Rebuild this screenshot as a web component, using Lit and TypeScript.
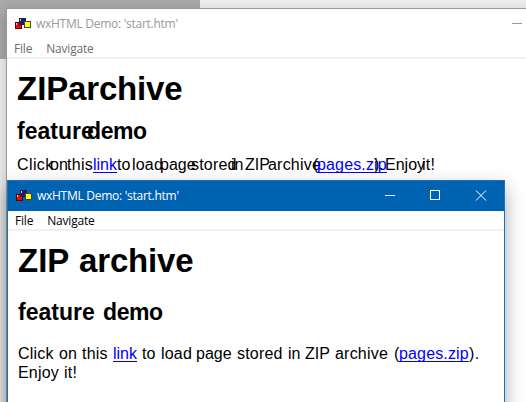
import { LitElement, html, css, svg } from "lit";
import { customElement, property } from "lit/decorators.js";
import { styleMap } from "lit/directives/style-map.js";

type Word = { t: string; w: number; s?: number; link?: boolean };

const words = (list: Word[]) => list.map((w) => html`<span
  class="word ${w.link ? "link" : ""}"
  style=${styleMap({ width: `${w.w}px`, letterSpacing: `${w.s ?? 0}px` })}>${w.t}</span>`);

@customElement("demo-window")
class DemoWindow extends LitElement {
  @property({ type: Boolean, reflect: true }) active = false;

  static styles = css`
    :host {
      box-sizing: border-box;
      display: flex;
      flex-direction: column;
      border: 1px solid #999;
      background: #fff;
      box-shadow: 0 4px 14px rgba(0, 0, 0, 0.22);
    }
    :host([active]) {
      border-color: #1a73b9;
      box-shadow: 0 8px 18px rgba(0, 0, 0, 0.34);
    }
    .title {
      display: flex;
      align-items: center;
      height: 30px;
      padding-left: 8px;
      color: #999;
      font: 12px/16px "Open Sans", "Noto Sans", sans-serif;
    }
    :host([active]) .title { background: #0063b1; color: #fff; }
    .logo { width: 16px; height: 12px; flex: none; margin-top: -1px; }
    .caption { flex: 1; margin-left: 5px; letter-spacing: -0.27px; white-space: pre; }
    .buttons { width: 137px; height: 30px; flex: none; }
    .menu {
      display: flex;
      gap: 14px;
      height: 18px;
      padding-left: 7px;
      border-bottom: 2px solid #f0f0f0;
      color: #6d6d6d;
      font: 12px/20px "Open Sans", "Noto Sans", sans-serif;
      letter-spacing: -0.2px;
    }
    :host([active]) .menu { color: #000; }
  `;

  render() {
    const box = (x: number, y: number, fill: string, edge: string) => svg`
      <rect x=${x} y=${y} width="7" height="7" fill=${edge}/>
      <rect x=${x + 1} y=${y + 1} width="5" height="5" fill=${fill}/>
      <rect x=${x + 1} y=${y + 1} width="1" height="2" fill="#fff" fill-opacity=".8"/>`;
    return html`
      <div class="title">
        <svg class="logo" viewBox="0 0 16 12" shape-rendering="crispEdges">
          ${box(0, 4, "#f00", "#500")}${box(4, 0, "#1c1c78", "#223")}${box(9, 3, "#ff0", "#443")}
        </svg>
        <span class="caption">wxHTML Demo: 'start.htm'</span>
        <svg class="buttons" viewBox="0 0 137 30" fill="none" stroke="currentColor">
          <path d="M18 14.5h10"/>
          <rect x="63.5" y="9.5" width="9" height="9"/>
          <path d="M109 9.5l10 10M119 9.5l-10 10"/>
        </svg>
      </div>
      <div class="menu"><span>File</span><span>Navigate</span></div>
      <slot></slot>`;
  }
}

@customElement("app-root")
class AppRoot extends LitElement {
  static styles = css`
    :host {
      display: block;
      position: relative;
      width: 526px;
      height: 402px;
      overflow: hidden;
      background: #f0f0f0;
      color: #000;
      font-family: "Liberation Sans", Arial, sans-serif;
    }
    .desktop-pane {
      position: absolute;
      left: 0;
      top: 0;
      width: 200px;
      height: 59px;
      background: #a9a9a9;
    }
    .back { position: absolute; left: 6px; top: 8px; width: 626px; height: 440px; }
    .front { position: absolute; left: 7px; top: 180px; width: 498px; height: 240px; }
    .page { padding: 9px 0 0 10px; }
    .row { display: flex; white-space: pre; }
    .word { flex: none; white-space: pre; }
    .link { color: #00f; text-decoration: underline; text-underline-offset: 2px; text-decoration-thickness: 1px; text-decoration-skip-ink: none; }
    .h1 { font-size: 33px; line-height: 42px; font-weight: 700; }
    .h2 { font-size: 23px; line-height: 26px; font-weight: 700; }
    .p { font-size: 16px; line-height: 19px; }
    .back .h2 { margin-top: 8px; }
    .back .p { margin-top: 11px; }
    .front .h2 { margin-top: 17px; }
    .front .p1 { margin-top: 19px; }
  `;

  render() {
    return html`
      <div class="desktop-pane"></div>
      <demo-window class="back">
        <div class="page">
          <div class="row h1">${words([{ t: "ZIP", w: 51 }, { t: "archive", w: 120, s: -0.15 }])}</div>
          <div class="row h2">${words([{ t: "feature", w: 70 }, { t: "demo", w: 70, s: -0.4 }])}</div>
          <div class="row p">${words([
            { t: "Click", w: 33, s: 0.4 }, { t: "on", w: 17 }, { t: "this", w: 26, s: 0.3 },
            { t: "link", w: 24, link: true }, { t: "to", w: 15 }, { t: "load", w: 28, s: 0.2 },
            { t: "page", w: 31 }, { t: "stored", w: 40, s: 0.2 }, { t: "in", w: 14 },
            { t: "ZIP", w: 23 }, { t: "archive", w: 45, s: 0.2 }, { t: "(", w: 4 },
            { t: "pages.zip", w: 57, s: 0.15, link: true }, { t: ").", w: 11 },
            { t: "Enjoy", w: 37, s: 0 }, { t: "it!", w: 20, s: 0.3 },
          ])}</div>
        </div>
      </demo-window>
      <demo-window class="front" active>
        <div class="page">
          <div class="row h1">${words([{ t: "ZIP", w: 61 }, { t: "archive", w: 120, s: -0.15 }])}</div>
          <div class="row h2">${words([{ t: "feature", w: 85 }, { t: "demo", w: 70, s: -0.4 }])}</div>
          <div class="row p p1">${words([
            { t: "Click", w: 41, s: 0.2 }, { t: "on", w: 23 }, { t: "this", w: 31, s: 0.2 },
            { t: "link", w: 29, link: true }, { t: "to", w: 19 }, { t: "load", w: 35, s: 0.2 },
            { t: "page", w: 41 }, { t: "stored", w: 51, s: 0.2 }, { t: "in", w: 17 },
            { t: "ZIP", w: 30 }, { t: "archive", w: 59, s: 0.2 }, { t: "(", w: 5 },
            { t: "pages.zip", w: 70, s: 0.15, link: true }, { t: ").", w: 12, s: 0.4 },
          ])}</div>
          <div class="row p">${words([{ t: "Enjoy", w: 46, s: 0.2 }, { t: "it!", w: 20, s: 0.2 }])}</div>
        </div>
      </demo-window>`;
  }
}
